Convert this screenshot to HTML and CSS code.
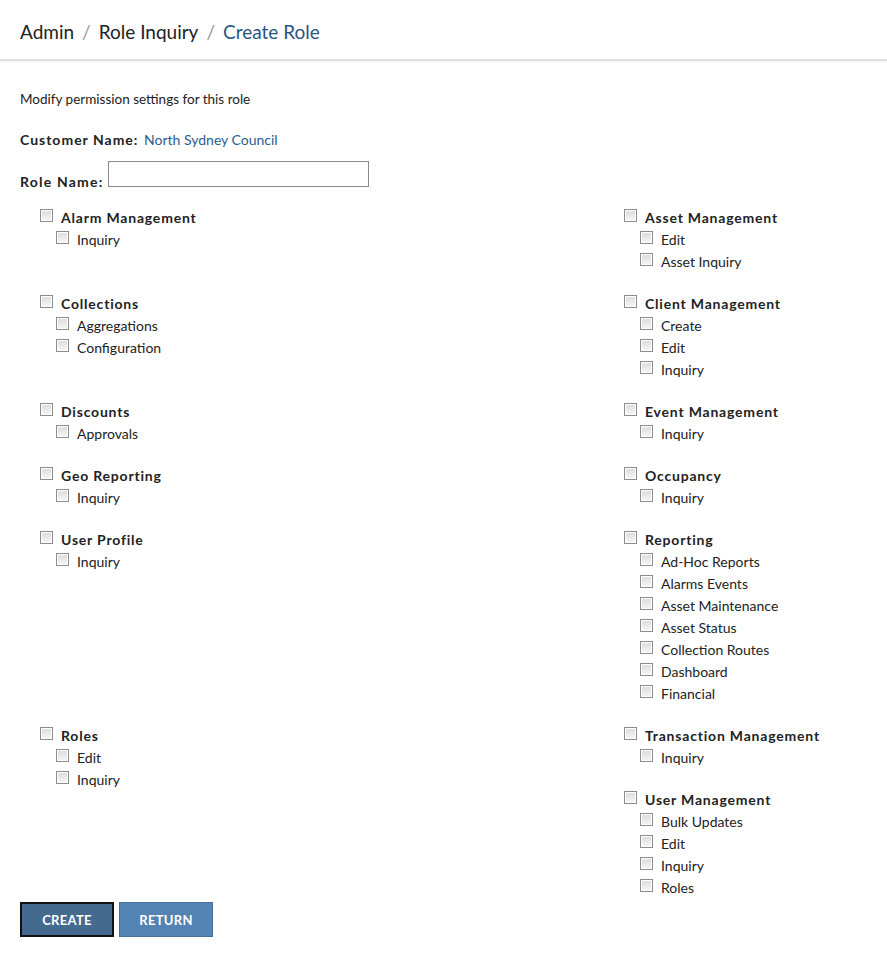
FILE: index.html
```html
<!DOCTYPE html>
<html>
<head>
<meta charset="utf-8">
<link rel="stylesheet" href="styles.css">
</head>
<body>
<header class="topbar">
  <nav class="crumbs">
    <span class="crumb">Admin</span><span class="sep">/</span><span class="crumb">Role Inquiry</span><span class="sep">/</span><span class="crumb current">Create Role</span>
  </nav>
</header>
<main class="content">
  <p class="intro">Modify permission settings for this role</p>
  <p class="customer"><strong>Customer Name:</strong> <a class="link">North Sydney Council</a></p>
  <div class="rolename"><label>Role Name:</label><input type="text" class="textbox"></div>

  <div class="perms">
    <div class="group"><label class="head"><input type="checkbox" class="cb">Alarm Management</label><label class="item"><input type="checkbox" class="cb">Inquiry</label></div>
    <div class="group"><label class="head"><input type="checkbox" class="cb">Asset Management</label><label class="item"><input type="checkbox" class="cb">Edit</label><label class="item"><input type="checkbox" class="cb">Asset Inquiry</label></div>

    <div class="group"><label class="head"><input type="checkbox" class="cb">Collections</label><label class="item"><input type="checkbox" class="cb">Aggregations</label><label class="item"><input type="checkbox" class="cb">Configuration</label></div>
    <div class="group"><label class="head"><input type="checkbox" class="cb">Client Management</label><label class="item"><input type="checkbox" class="cb">Create</label><label class="item"><input type="checkbox" class="cb">Edit</label><label class="item"><input type="checkbox" class="cb">Inquiry</label></div>

    <div class="group"><label class="head"><input type="checkbox" class="cb">Discounts</label><label class="item"><input type="checkbox" class="cb">Approvals</label></div>
    <div class="group"><label class="head"><input type="checkbox" class="cb">Event Management</label><label class="item"><input type="checkbox" class="cb">Inquiry</label></div>

    <div class="group"><label class="head"><input type="checkbox" class="cb">Geo Reporting</label><label class="item"><input type="checkbox" class="cb">Inquiry</label></div>
    <div class="group"><label class="head"><input type="checkbox" class="cb">Occupancy</label><label class="item"><input type="checkbox" class="cb">Inquiry</label></div>

    <div class="group"><label class="head"><input type="checkbox" class="cb">User Profile</label><label class="item"><input type="checkbox" class="cb">Inquiry</label></div>
    <div class="group"><label class="head"><input type="checkbox" class="cb">Reporting</label><label class="item"><input type="checkbox" class="cb">Ad-Hoc Reports</label><label class="item"><input type="checkbox" class="cb">Alarms Events</label><label class="item"><input type="checkbox" class="cb">Asset Maintenance</label><label class="item"><input type="checkbox" class="cb">Asset Status</label><label class="item"><input type="checkbox" class="cb">Collection Routes</label><label class="item"><input type="checkbox" class="cb">Dashboard</label><label class="item"><input type="checkbox" class="cb">Financial</label></div>

    <div class="group span2"><label class="head"><input type="checkbox" class="cb">Roles</label><label class="item"><input type="checkbox" class="cb">Edit</label><label class="item"><input type="checkbox" class="cb">Inquiry</label></div>
    <div class="group"><label class="head"><input type="checkbox" class="cb">Transaction Management</label><label class="item"><input type="checkbox" class="cb">Inquiry</label></div>

    <div class="group right"><label class="head"><input type="checkbox" class="cb">User Management</label><label class="item"><input type="checkbox" class="cb">Bulk Updates</label><label class="item"><input type="checkbox" class="cb">Edit</label><label class="item"><input type="checkbox" class="cb">Inquiry</label><label class="item"><input type="checkbox" class="cb">Roles</label></div>
  </div>

  <div class="actions">
    <button class="btn btn-create">CREATE</button>
    <button class="btn btn-return">RETURN</button>
  </div>
</main>
</body>
</html>
```
FILE: styles.css
```css
* { box-sizing: border-box; }
body {
  margin: 0;
  font-family: "Lato", "DejaVu Sans", sans-serif;
  color: #222;
  background: #fff;
}
.topbar {
  height: 61px;
  border-bottom: 2px solid #dedede;
  box-shadow: 0 1px 2px rgba(0,0,0,0.06);
  padding: 3px 20px 0;
  display: flex;
  align-items: center;
}
.crumbs {
  font-size: 19px;
  color: #222;
}
.sep { color: #999; margin: 0 8px; }
.current { color: #2a5583; }
.content { padding: 0 20px; }
.intro { margin: 30px 0 0; font-size: 13.5px; line-height: 16px; }
.customer { margin: 24px 0 0; font-size: 14px; line-height: 18px; }
.customer strong { font-weight: 700; letter-spacing: 1px; margin-right: 2px; }
.link { color: #2d5c8e; }
.rolename { display: flex; align-items: flex-end; margin-top: 12px; font-size: 14px; font-weight: 700; }
.rolename label { margin: 0 5px -3px 0; line-height: 17px; letter-spacing: 1.2px; }
.textbox {
  width: 261px; height: 26px;
  border: 1px solid #8a8a8a;
  margin: 0;
}
.perms {
  display: grid;
  grid-template-columns: 584px 1fr;
  margin: 19px 0 0 20px;
  align-items: start;
}
.group { display: flex; flex-direction: column; margin-bottom: 20px; }
.span2 { grid-row: span 2; }
.right { grid-column: 2; }
.head, .item {
  display: flex;
  align-items: center;
  height: 22px;
  font-size: 14px;
}
.head { font-weight: 700; letter-spacing: 0.8px; }
.item { padding-left: 16px; color: #222; }
.cb {
  appearance: none;
  -webkit-appearance: none;
  width: 13px; height: 13px;
  margin: 0 8px 0 0;
  border: 1px solid #8d8d8d;
  background: linear-gradient(#dcdcdc, #f6f6f6);
  box-shadow: inset 0 0 0 1px #fff;
  position: relative;
  top: -2px;
  flex: none;
}
.actions { display: flex; gap: 5px; margin-top: -16px; }
.btn {
  width: 94px; height: 35px;
  font-family: inherit;
  font-size: 13px; font-weight: 700;
  color: #fff;
  letter-spacing: 0.3px;
  border: 1px solid #46709a;
}
.btn-create { background: #446a90; border: 2px solid #111; }
.btn-return { background: #5283b3; }
```
